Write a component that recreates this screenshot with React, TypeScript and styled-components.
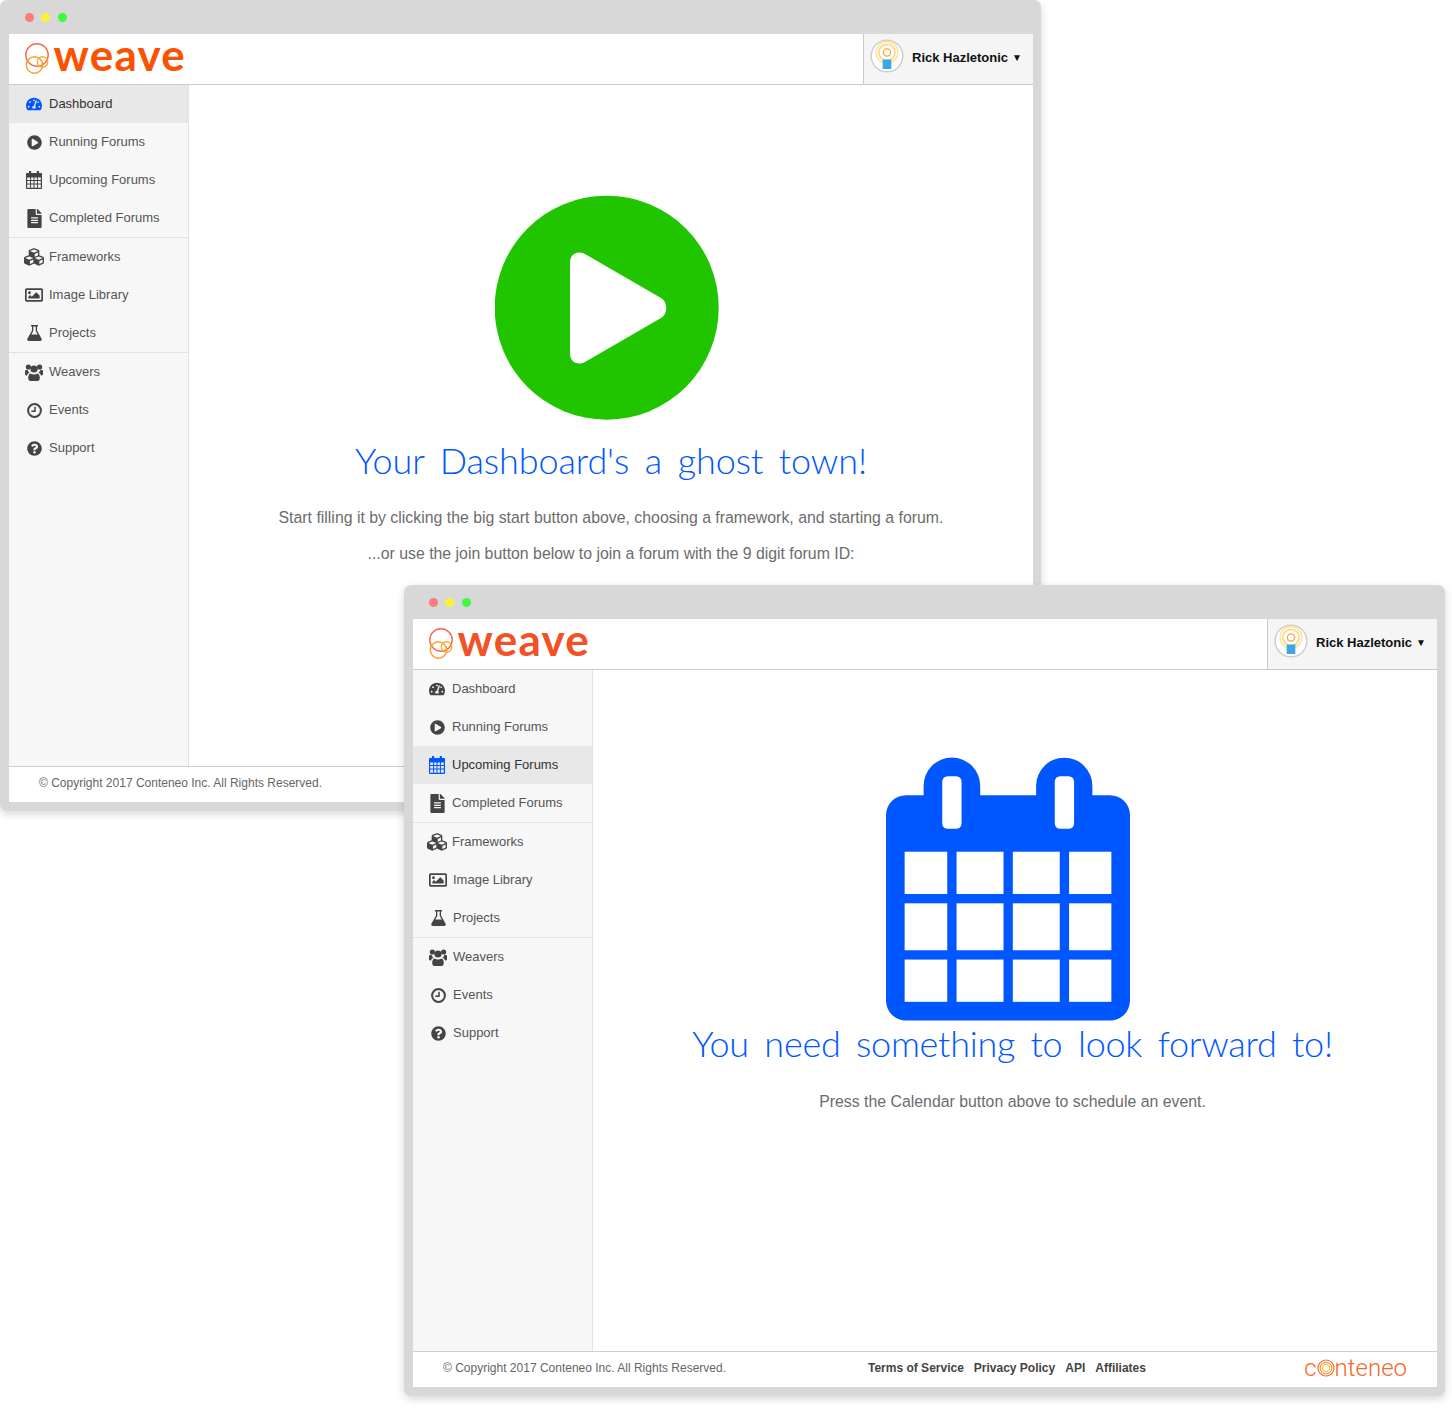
import React from "react";
import styled, { createGlobalStyle } from "styled-components";
import {
  FaTachometerAlt,
  FaPlayCircle,
  FaFileAlt,
  FaCubes,
  FaRegImage,
  FaQuestionCircle,
} from "react-icons/fa";

const Global = createGlobalStyle`
  html, body { margin: 0; padding: 0; background: #fff; }
  body { font-family: "Liberation Sans", Arial, sans-serif; }
`;

const Desktop = styled.div`
  position: relative;
  width: 1452px;
  height: 1423px;
  overflow: hidden;
  background: #fff;
`;

const Win = styled.section<{ $left: number; $top: number }>`
  position: absolute;
  left: ${(p) => p.$left}px;
  top: ${(p) => p.$top}px;
  width: 1041px;
  height: 811px;
  box-sizing: border-box;
  padding: 0 8px 9px 9px;
  background: #d8d8d8;
  border-radius: 7px;
  box-shadow: 0 3px 8px rgba(0, 0, 0, 0.16);
  display: flex;
  flex-direction: column;
`;

const TitleBar = styled.div`
  height: 34px;
  flex: none;
  box-sizing: border-box;
  display: flex;
  align-items: center;
  gap: 7.5px;
  padding: 1px 0 0 15.5px;
`;

const Dot = styled.span<{ $c: string }>`
  width: 9px;
  height: 9px;
  border-radius: 50%;
  background: ${(p) => p.$c};
`;

const Surface = styled.div`
  flex: 1;
  min-height: 0;
  background: #fff;
  display: flex;
  flex-direction: column;
`;

const Header = styled.header`
  height: 51px;
  flex: none;
  box-sizing: border-box;
  border-bottom: 1px solid #cbcbcb;
  display: flex;
  justify-content: space-between;
`;

const Brand = styled.div`
  display: flex;
  align-items: center;
  padding-left: 15px;
  gap: 3.5px;
`;

const Wordmark = styled.span<{ $c: string }>`
  font-family: "Lato", sans-serif;
  font-weight: 700;
  font-size: 44px;
  line-height: 50px;
  letter-spacing: 1.25px;
  color: ${(p) => p.$c};
  position: relative;
  top: -5px;
`;

const UserPanel = styled.div`
  width: 170px;
  box-sizing: border-box;
  background: #f5f5f5;
  border-left: 1px solid #cbcbcb;
  display: flex;
  align-items: center;
  padding: 0 0 6px 6px;
  gap: 8px;
`;

const UserName = styled.span`
  display: flex;
  align-items: center;
  gap: 4px;
  font-size: 13px;
  font-weight: 700;
  color: #111;
  white-space: nowrap;
  margin-top: 2px;
`;

const Caret = styled.span`
  font-size: 10px;
  line-height: 13px;
  font-weight: 400;
  color: #111;
`;

const Body = styled.div`
  flex: 1;
  min-height: 0;
  display: flex;
`;

const Sidebar = styled.nav`
  width: 180px;
  flex: none;
  box-sizing: border-box;
  background: #f7f7f7;
  border-right: 1px solid #e2e2e2;
`;

const NavGroup = styled.div`
  border-bottom: 1px solid #e2e2e2;
  &:last-child {
    border-bottom: 0;
  }
`;

const NavRow = styled.div<{ $active?: boolean; $tight?: boolean }>`
  height: 38px;
  display: flex;
  align-items: center;
  padding-left: ${(p) => (p.$tight ? 14 : 15)}px;
  background: ${(p) => (p.$active ? "#e8e8e8" : "transparent")};
  color: ${(p) => (p.$active ? "#333" : "#555")};
  font-size: 13px;
`;

const NavIcon = styled.span<{ $active?: boolean }>`
  width: 20px;
  flex: none;
  display: flex;
  align-items: center;
  justify-content: center;
  margin-right: 5px;
  color: ${(p) => (p.$active ? "#0057ff" : "#444")};
`;

const NavLabel = styled.span`
  margin-bottom: 2px;
`;

const Main = styled.main<{ $top: number; $right: number }>`
  flex: 1;
  min-width: 0;
  display: flex;
  flex-direction: column;
  align-items: center;
  padding: ${(p) => p.$top}px ${(p) => p.$right}px 0 0;
  overflow: hidden;
`;

const HeroIcon = styled.div<{ $shift: number }>`
  line-height: 0;
  margin-left: ${(p) => p.$shift}px;
`;

const Heading = styled.h1<{ $spacing: number; $gap: number }>`
  margin: ${(p) => p.$gap}px 0 0;
  font-family: "Lato", sans-serif;
  font-weight: 300;
  font-size: 36px;
  line-height: 44px;
  letter-spacing: ${(p) => p.$spacing}px;
  word-spacing: 6px;
  color: #0057ff;
  white-space: nowrap;
`;

const Para = styled.p<{ $gap: number }>`
  margin: ${(p) => p.$gap}px 0 0;
  font-size: 15.85px;
  line-height: 20px;
  color: #6c6c6c;
  white-space: nowrap;
`;

const Footer = styled.footer`
  height: 36px;
  flex: none;
  box-sizing: border-box;
  border-top: 1px solid #cfcfcf;
  background: #fff;
  display: flex;
  align-items: center;
  padding: 0 30px 4px;
  font-size: 12px;
  color: #666;
`;

const Copy = styled.span`
  width: 425px;
  flex: none;
`;

const Links = styled.div`
  display: flex;
  gap: 10px;
  font-weight: 700;
  color: #444;
`;

const Maker = styled.div`
  margin-left: auto;
  display: flex;
  align-items: center;
  font-family: "Roboto", sans-serif;
  font-weight: 300;
  font-size: 24px;
  line-height: 24px;
  color: #f5692a;
`;

function WeaveRings() {
  return (
    <svg width="26" height="32" viewBox="0 0 26 32" fill="none">
      <circle cx="13" cy="12" r="11.2" stroke="#f56a4e" strokeWidth="1.4" />
      <circle cx="10.5" cy="22" r="8.2" stroke="#fb9f32" strokeWidth="1.5" />
      <circle cx="18.5" cy="19" r="5.2" stroke="#fbab33" strokeWidth="1.4" />
    </svg>
  );
}

function Avatar() {
  return (
    <svg width="34" height="34" viewBox="0 0 34 34">
      <circle cx="17" cy="17" r="15.8" fill="#fff" stroke="#cfcfcf" strokeWidth="1.5" />
      <circle cx="17" cy="13.5" r="11" fill="#fff8e2" stroke="#fde3a0" strokeWidth="1.3" />
      <circle cx="17" cy="13.5" r="8" fill="#fff" stroke="#fcd477" strokeWidth="1.4" />
      <circle cx="17" cy="13.5" r="3.6" fill="#fff" stroke="#f4a63a" strokeWidth="1.3" />
      <rect x="12.7" y="20.5" width="8.6" height="9.5" fill="#3aa6e6" />
    </svg>
  );
}

function SmallCalendar() {
  return (
    <svg width="16" height="18" viewBox="0 0 16 18" fill="currentColor">
      <path
        fillRule="evenodd"
        d="M3 0h2.2v2H10.8V0H13v2h2a1 1 0 0 1 1 1v14a1 1 0 0 1-1 1H1a1 1 0 0 1-1-1V3a1 1 0 0 1 1-1h2zM1.2 6.4v2.6h2.9V6.4zm3.9 0v2.6h2.4V6.4zm3.4 0v2.6h2.4V6.4zm3.4 0v2.6h2.9V6.4zM1.2 10v2.5h2.9V10zm3.9 0v2.5h2.4V10zm3.4 0v2.5h2.4V10zm3.4 0v2.5h2.9V10zM1.2 13.5v3.3h2.9v-3.3zm3.9 0v3.3h2.4v-3.3zm3.4 0v3.3h2.4v-3.3zm3.4 0v3.3h2.9v-3.3z"
      />
    </svg>
  );
}

function SmallFlask() {
  return (
    <svg width="15" height="16" viewBox="0 0 15 16" fill="currentColor">
      <path
        fillRule="evenodd"
        d="M4 0h7v1.4H10v4.2l4.6 8.2c.5 1-.1 2.2-1.3 2.2H1.7C.5 16-.1 14.800.4 13.800L5 5.600V1.400H4zm2.300 1.400v4.600L4.300 9.600h6.400L8.700 6V1.400z"
      />
    </svg>
  );
}

function SmallUsers() {
  return (
    <svg width="18" height="17" viewBox="0 0 18 17" fill="currentColor">
      <circle cx="3.400" cy="3" r="2.600" />
      <circle cx="14.600" cy="3" r="2.600" />
      <circle cx="9" cy="5" r="3.600" />
      <path d="M0 6.500c.8-.6 1.600-.8 2.500-.8 .4 1.200 1 2.200 2 3-1.400.5-2.200 1.500-2.500 2.800H1.200C.5 11.500 0 11 0 10.300z" />
      <path d="M18 6.500c-.8-.6-1.600-.8-2.500-.8-.4 1.200-1 2.200-2 3 1.400.5 2.200 1.500 2.500 2.800h.8c.7 0 1.200-.5 1.200-1.200z" />
      <path d="M5.500 9.500c1 .7 2.200 1 3.500 1s2.500-.3 3.500-1c1.500.5 2.300 2.200 2.300 4.500 0 1.800-1 3-2.500 3H5.700c-1.500 0-2.500-1.200-2.500-3 0-2.300.8-4 2.300-4.500z" />
    </svg>
  );
}

function SmallClock() {
  return (
    <svg width="15" height="15" viewBox="0 0 15 15" fill="none" stroke="currentColor">
      <circle cx="7.500" cy="7.500" r="6.400" strokeWidth="2" />
      <path d="M8 3.800v4.500H4.300" strokeWidth="1.500" />
    </svg>
  );
}

function BigPlay() {
  return (
    <svg width="224" height="226" viewBox="0 0 224 226">
      <circle cx="111.700" cy="112.700" r="112" fill="#20c500" />
      <path
        d="M75 68c0-9 7-13 15-9l76 44c7 4 7 16 0 20l-76 44c-8 4-15 0-15-9z"
        fill="#fff"
      />
    </svg>
  );
}

function BigCalendar() {
  const cols: [number, number][] = [[103, 128], [259, 141], [428, 141], [597, 127]];
  const rows: [number, number][] = [[335, 127], [490, 141], [659, 127]];
  return (
    <svg width="244" height="264" viewBox="47 52 733 790">
      <path
        fill="#0057ff"
        d="M160 165v-28a85 85 0 0 1 170 0v28h168v-28a84.500 84.500 0 0 1 169 0v28h53a60 60 0 0 1 60 60v557a60 60 0 0 1-60 60H107a60 60 0 0 1-60-60V225a60 60 0 0 1 60-60z"
      />
      <rect x="216" y="108" width="58" height="158" rx="16" fill="#fff" />
      <rect x="554" y="108" width="58" height="158" rx="16" fill="#fff" />
      {rows.map(([y, h]) =>
        cols.map(([x, w]) => <rect key={`${x}-${y}`} x={x} y={y} width={w} height={h} fill="#fff" />)
      )}
    </svg>
  );
}

function ConteneoRing() {
  return (
    <svg width="18" height="18" viewBox="0 0 18 18" fill="none">
      <circle cx="9" cy="9" r="8" stroke="#f5692a" strokeWidth="1.200" />
      <circle cx="9" cy="9" r="5.800" stroke="#f9963a" strokeWidth="1.100" />
      <circle cx="9" cy="9" r="3.600" stroke="#fcc23c" strokeWidth="1.100" />
    </svg>
  );
}

type Item = { label: string; icon: React.ReactNode; tight?: boolean };
const groups: Item[][] = [
  [
    { label: "Dashboard", icon: <FaTachometerAlt size={16} />, tight: true },
    { label: "Running Forums", icon: <FaPlayCircle size={15} />, tight: true },
    { label: "Upcoming Forums", icon: <SmallCalendar />, tight: true },
    { label: "Completed Forums", icon: <FaFileAlt size={19} />, tight: true },
  ],
  [
    { label: "Frameworks", icon: <FaCubes size={22} />, tight: true },
    { label: "Image Library", icon: <FaRegImage size={18} /> },
    { label: "Projects", icon: <SmallFlask /> },
  ],
  [
    { label: "Weavers", icon: <SmallUsers /> },
    { label: "Events", icon: <SmallClock /> },
    { label: "Support", icon: <FaQuestionCircle size={15} /> },
  ],
];

type WindowProps = {
  left: number;
  top: number;
  activeLabel: string;
  brand: string;
  mainTop: number;
  mainRight: number;
  tightRows?: boolean;
  children: React.ReactNode;
  footerExtra?: React.ReactNode;
};

function AppWindow({ left, top, activeLabel, brand, mainTop, mainRight, tightRows, children, footerExtra }: WindowProps) {
  return (
    <Win $left={left} $top={top}>
      <TitleBar>
        <Dot $c="#fd7b7b" />
        <Dot $c="#fff033" />
        <Dot $c="#3dfb3d" />
      </TitleBar>
      <Surface>
        <Header>
          <Brand>
            <WeaveRings />
            <Wordmark $c={brand}>weave</Wordmark>
          </Brand>
          <UserPanel>
            <Avatar />
            <UserName>
              Rick Hazletonic<Caret>▼</Caret>
            </UserName>
          </UserPanel>
        </Header>
        <Body>
          <Sidebar>
            {groups.map((g, i) => (
              <NavGroup key={i}>
                {g.map((item) => {
                  const active = item.label === activeLabel;
                  return (
                    <NavRow key={item.label} $active={active} $tight={tightRows && item.tight}>
                      <NavIcon $active={active}>{item.icon}</NavIcon>
                      <NavLabel>{item.label}</NavLabel>
                    </NavRow>
                  );
                })}
              </NavGroup>
            ))}
          </Sidebar>
          <Main $top={mainTop} $right={mainRight}>{children}</Main>
        </Body>
        <Footer>
          <Copy>© Copyright 2017 Conteneo Inc. All Rights Reserved.</Copy>
          {footerExtra}
        </Footer>
      </Surface>
    </Win>
  );
}

export default function App() {
  return (
    <Desktop>
      <Global />
      <AppWindow left={0} top={0} activeLabel="Dashboard" brand="#fb5200" mainTop={110} mainRight={0}>
        <HeroIcon $shift={-9}>
          <BigPlay />
        </HeroIcon>
        <Heading $spacing={-0.1} $gap={17}>
          Your Dashboard's a ghost town!
        </Heading>
        <Para $gap={26}>Start filling it by clicking the big start button above, choosing a framework, and starting a forum.</Para>
        <Para $gap={16}>...or use the join button below to join a forum with the 9 digit forum ID:</Para>
      </AppWindow>
      <AppWindow
        left={404}
        top={585}
        activeLabel="Upcoming Forums"
        brand="#f25225"
        mainTop={87}
        mainRight={5}
        tightRows
        footerExtra={
          <>
            <Links>
              <span>Terms of Service</span>
              <span>Privacy Policy</span>
              <span>API</span>
              <span>Affiliates</span>
            </Links>
            <Maker>
              c<ConteneoRing />nteneo
            </Maker>
          </>
        }
      >
        <HeroIcon $shift={-9}>
          <BigCalendar />
        </HeroIcon>
        <Heading $spacing={-0.26} $gap={0}>
          You need something to look forward to!
        </Heading>
        <Para $gap={27}>Press the Calendar button above to schedule an event.</Para>
      </AppWindow>
    </Desktop>
  );
}
